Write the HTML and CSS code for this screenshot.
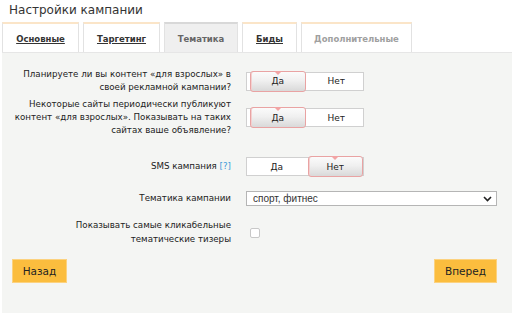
FILE: index.html
```html
<!DOCTYPE html>
<html lang="ru">
<head>
<meta charset="utf-8">
<link rel="stylesheet" href="styles.css">
</head>
<body>
<div class="title">Настройки кампании</div>
<div class="tabs">
  <div class="tab tab-link">Основные</div>
  <div class="tab tab-link">Таргетинг</div>
  <div class="tab tab-active">Тематика</div>
  <div class="tab tab-link">Биды</div>
  <div class="tab tab-disabled">Дополнительные</div>
</div>
<div class="panel">
  <div class="row r1">
    <div class="label">Планируете ли вы контент «для взрослых» в<br>своей рекламной кампании?</div>
    <div class="toggle">
      <div class="opt sel">Да</div>
      <div class="opt">Нет</div>
    </div>
  </div>
  <div class="row r2">
    <div class="label">Некоторые сайты периодически публикуют<br>контент «для взрослых». Показывать на таких<br>сайтах ваше объявление?</div>
    <div class="toggle">
      <div class="opt sel">Да</div>
      <div class="opt">Нет</div>
    </div>
  </div>
  <div class="row r3">
    <div class="label">SMS кампания <span class="help">[?]</span></div>
    <div class="toggle">
      <div class="opt">Да</div>
      <div class="opt sel">Нет</div>
    </div>
  </div>
  <div class="row r4">
    <div class="label">Тематика кампании</div>
    <div class="select">
      <span>спорт, фитнес</span>
      <svg width="9" height="6" viewBox="0 0 9 6"><path d="M1 1 L4.5 4.5 L8 1" fill="none" stroke="#222" stroke-width="1.6"/></svg>
    </div>
  </div>
  <div class="row r5">
    <div class="label">Показывать самые кликабельные<br>тематические тизеры</div>
    <div class="check"></div>
  </div>
  <div class="buttons">
    <div class="btn btn-back">Назад</div>
    <div class="btn btn-next">Вперед</div>
  </div>
</div>
</body>
</html>
```
FILE: styles.css
```css
html, body {
  margin: 0;
  padding: 0;
  background: #fff;
  font-family: "DejaVu Sans", Verdana, sans-serif;
  color: #222;
}
.title {
  font-size: 12px;
  line-height: 16px;
  padding: 2px 0 0 9px;
  height: 20px;
  color: #333;
}
.tabs {
  display: flex;
  gap: 4px;
  margin-left: 2px;
  height: 30px;
  align-items: stretch;
}
.tab {
  box-sizing: border-box;
  border: 1px solid #e2e2e2;
  border-top: 2px solid #fbe5c8;
  border-bottom: none;
  font-size: 8.5px;
  font-weight: bold;
  display: flex;
  align-items: center;
  justify-content: center;
  padding: 2px 10px 0;
  color: #333;
  background: #fff;
}
.tab-link { text-decoration: underline; }
.tab:nth-child(1) { width: 77px; }
.tab:nth-child(2) { width: 77px; }
.tab:nth-child(3) { width: 74px; }
.tab:nth-child(4) { width: 55px; }
.tab:nth-child(5) { width: 111px; }
.tab-active {
  background: #efefef;
  border-top-color: #d8d8d8;
  color: #666;
}
.tab-disabled { color: #a0a0a0; }
.panel {
  margin-left: 2px;
  background: #f4f5f3;
  border-top: 1px solid #e6e6e6;
  height: 261px;
  box-sizing: border-box;
  padding-top: 15px;
}
.row {
  display: grid;
  grid-template-columns: 229px auto;
  column-gap: 15px;
  align-items: center;
}
.label {
  text-align: right;
  font-size: 8.7px;
  line-height: 13.3px;
  color: #222;
  white-space: nowrap;
}
.r2 { margin-top: 3px; }
.r3 { margin-top: 20px; }
.r4 { margin-top: 15px; }
.r5 { margin-top: 13px; }
.help { color: #3a9ad9; }
.toggle {
  box-sizing: border-box;
  width: 118px;
  height: 19px;
  border: 1px solid #d0d0d0;
  background: #fff;
  display: flex;
  gap: 4px;
  padding-left: 3px;
  align-items: center;
}
.opt {
  flex: 1;
  position: relative;
  height: 21px;
  box-sizing: border-box;
  font-size: 9px;
  display: flex;
  align-items: center;
  justify-content: center;
  color: #222;
}
.opt.sel {
  border: 1px solid #e9a3a3;
  border-radius: 3px;
  background: linear-gradient(#fbfbfb 0%, #f0f0f0 45%, #d9d9d9 100%);
  box-shadow: inset 1px 0 0 #f3d0d0;
}
.opt.sel::before {
  content: "";
  position: absolute;
  top: -1px;
  left: 50%;
  margin-left: -4px;
  border-left: 4px solid transparent;
  border-right: 4px solid transparent;
  border-top: 4px solid #f2a4a4;
}
.select {
  box-sizing: border-box;
  width: 251px;
  height: 15px;
  border: 1px solid #b5b5b5;
  background: #fff;
  display: flex;
  align-items: center;
  justify-content: space-between;
  padding: 0 4px 0 6px;
  font-family: "Liberation Sans", Arial, sans-serif;
  font-size: 10px;
  color: #333;
}
.check {
  width: 10px;
  height: 10px;
  box-sizing: border-box;
  border: 1px solid #c8c8c8;
  border-radius: 2px;
  background: #fff;
  margin-left: 4px;
}
.buttons {
  display: flex;
  justify-content: space-between;
  padding: 0 15px 0 10px;
  margin-top: 13px;
}
.btn {
  box-sizing: border-box;
  height: 24px;
  background: #fbbd3e;
  border: 1px solid #fcd27f;
  display: flex;
  align-items: center;
  justify-content: center;
  font-family: "DejaVu Sans", Verdana, sans-serif;
  font-size: 10.5px;
  color: #222;
}
.btn-back { width: 55px; }
.btn-next { width: 63px; }
```
